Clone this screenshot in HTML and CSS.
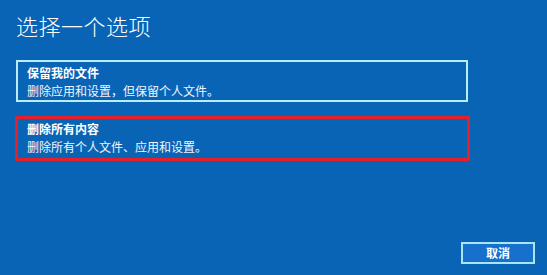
FILE: index.html
```html
<!DOCTYPE html>
<html lang="zh-CN">
<head>
<meta charset="utf-8">
<title>选择一个选项</title>
<link rel="stylesheet" href="styles.css">
</head>
<body>
<div class="screen">
  <h1 class="title">选择一个选项</h1>
  <div class="options">
    <div class="option option-keep">
      <div class="opt-title">保留我的文件</div>
      <div class="opt-desc">删除应用和设置，但保留个人文件。</div>
    </div>
    <div class="option option-remove">
      <div class="opt-title">删除所有内容</div>
      <div class="opt-desc">删除所有个人文件、应用和设置。</div>
    </div>
  </div>
  <div class="footer">
    <button class="cancel">取消</button>
  </div>
</div>
</body>
</html>
```

FILE: styles.css
```css
html, body {
  margin: 0;
  padding: 0;
  background: #0a64b6;
}
body {
  font-family: "Noto Sans CJK SC", "Noto Sans", sans-serif;
  color: #ffffff;
}
.screen {
  height: 275px;
  box-sizing: border-box;
  padding: 10px 12px 11px 16px;
  display: flex;
  flex-direction: column;
}
.title {
  margin: 0;
  font-size: 22px;
  font-weight: 300;
  line-height: 30px;
  letter-spacing: 0.5px;
}
.options {
  margin-top: 20px;
  display: flex;
  flex-direction: column;
  gap: 14px;
  width: 455px;
}
.option {
  box-sizing: border-box;
  font-size: 12px;
  line-height: 18px;
}
.option-keep {
  width: 452px;
  border: 2px solid #b8eef8;
  padding: 2px 10px 0 9px;
}
.option-remove {
  width: 455px;
  margin-left: -1px;
  border: 3px solid #e3202c;
  padding: 1px 10px 2px 9px;
}
.opt-title {
  font-weight: 700;
}
.opt-desc {
  font-weight: 400;
  color: #f2f6fb;
}
.footer {
  margin-top: auto;
  display: flex;
  justify-content: flex-end;
}
.cancel {
  width: 74px;
  height: 22px;
  box-sizing: border-box;
  background: #1670cc;
  border: 2px solid #a8e6f6;
  color: #ffffff;
  font-family: "Noto Sans CJK SC", "Noto Sans", sans-serif;
  font-size: 12px;
  font-weight: 700;
  line-height: 16px;
  padding: 0;
}
```
